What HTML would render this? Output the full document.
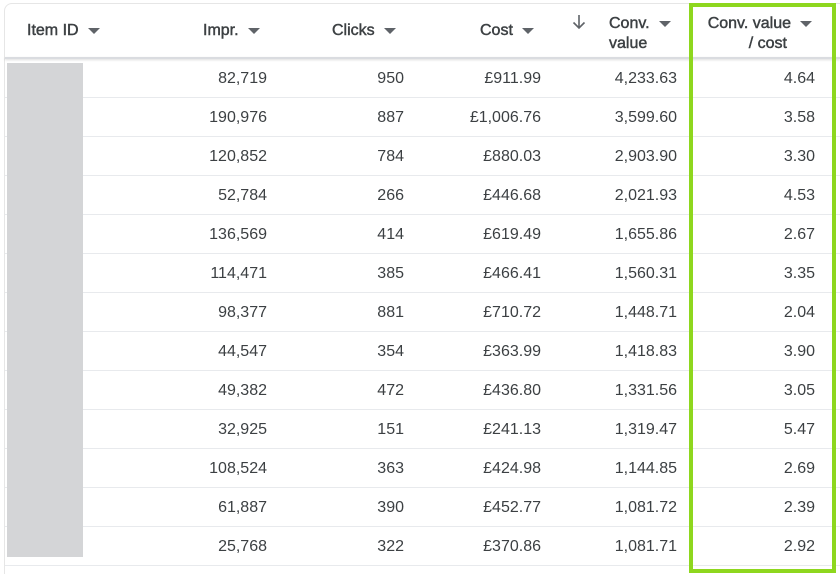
<!DOCTYPE html>
<html style="height:575px;overflow:hidden"><head><style>
body{margin:0;width:840px;height:575px;background:#fff;font-family:"Liberation Sans",Arial,sans-serif;color:#3c4043;overflow:hidden;position:relative}
.card{position:absolute;left:4px;top:3px;width:840px;height:570px;border:1px solid #e6e6e6;border-bottom:none;border-radius:8px 0 0 0}
.hdr{position:absolute;top:57px;left:5px;right:0;height:2px;background:#dadce0;box-shadow:0 1px 2px rgba(0,0,0,.15)}
.h{position:absolute;font-size:16px;color:#3c4043;line-height:20px;-webkit-text-stroke:0.45px #3c4043}
.tri{display:inline-block;width:0;height:0;border-left:6px solid transparent;border-right:6px solid transparent;border-top:6px solid #5f6368;vertical-align:middle;margin-left:9px}
.row{position:absolute;left:5px;right:0;height:39px;border-bottom:1px solid #e8eaed}
.c{position:absolute;top:1px;line-height:39px;font-size:16px;text-align:right}
.gray{position:absolute;left:7px;top:63px;width:76px;height:494px;background:#d4d5d7}
.green{position:absolute;left:689px;top:3px;width:139px;height:562px;border:4px solid #8ed71e}
</style></head><body>
<div class="card"></div>
<div class="h" style="left:27px;top:21px">Item ID<span class="tri"></span></div>
<div class="h" style="left:203px;top:21px">Impr.<span class="tri"></span></div>
<div class="h" style="left:332px;top:21px">Clicks<span class="tri"></span></div>
<div class="h" style="left:480px;top:21px">Cost<span class="tri"></span></div>
<svg style="position:absolute;left:571px;top:14px" width="16" height="16" viewBox="0 0 16 16"><path d="M8 1V14M2.5 8.5L8 14L13.5 8.5" fill="none" stroke="#5f6368" stroke-width="1.6"/></svg>
<div class="h" style="left:609px;top:14px">Conv.<span class="tri"></span><br>value</div>
<div class="h" style="left:700px;top:14px;width:112px;text-align:right">Conv. value<span class="tri"></span></div>
<div class="h" style="left:700px;top:34px;width:87px;text-align:right">/ cost</div>
<div class="hdr"></div>
<div class="row" style="top:58px"><span class="c" style="right:573px">82,719</span><span class="c" style="right:436px">950</span><span class="c" style="right:299px">£911.99</span><span class="c" style="right:163px">4,233.63</span><span class="c" style="right:25px">4.64</span></div>
<div class="row" style="top:97px"><span class="c" style="right:573px">190,976</span><span class="c" style="right:436px">887</span><span class="c" style="right:299px">£1,006.76</span><span class="c" style="right:163px">3,599.60</span><span class="c" style="right:25px">3.58</span></div>
<div class="row" style="top:136px"><span class="c" style="right:573px">120,852</span><span class="c" style="right:436px">784</span><span class="c" style="right:299px">£880.03</span><span class="c" style="right:163px">2,903.90</span><span class="c" style="right:25px">3.30</span></div>
<div class="row" style="top:175px"><span class="c" style="right:573px">52,784</span><span class="c" style="right:436px">266</span><span class="c" style="right:299px">£446.68</span><span class="c" style="right:163px">2,021.93</span><span class="c" style="right:25px">4.53</span></div>
<div class="row" style="top:214px"><span class="c" style="right:573px">136,569</span><span class="c" style="right:436px">414</span><span class="c" style="right:299px">£619.49</span><span class="c" style="right:163px">1,655.86</span><span class="c" style="right:25px">2.67</span></div>
<div class="row" style="top:253px"><span class="c" style="right:573px">114,471</span><span class="c" style="right:436px">385</span><span class="c" style="right:299px">£466.41</span><span class="c" style="right:163px">1,560.31</span><span class="c" style="right:25px">3.35</span></div>
<div class="row" style="top:292px"><span class="c" style="right:573px">98,377</span><span class="c" style="right:436px">881</span><span class="c" style="right:299px">£710.72</span><span class="c" style="right:163px">1,448.71</span><span class="c" style="right:25px">2.04</span></div>
<div class="row" style="top:331px"><span class="c" style="right:573px">44,547</span><span class="c" style="right:436px">354</span><span class="c" style="right:299px">£363.99</span><span class="c" style="right:163px">1,418.83</span><span class="c" style="right:25px">3.90</span></div>
<div class="row" style="top:370px"><span class="c" style="right:573px">49,382</span><span class="c" style="right:436px">472</span><span class="c" style="right:299px">£436.80</span><span class="c" style="right:163px">1,331.56</span><span class="c" style="right:25px">3.05</span></div>
<div class="row" style="top:409px"><span class="c" style="right:573px">32,925</span><span class="c" style="right:436px">151</span><span class="c" style="right:299px">£241.13</span><span class="c" style="right:163px">1,319.47</span><span class="c" style="right:25px">5.47</span></div>
<div class="row" style="top:448px"><span class="c" style="right:573px">108,524</span><span class="c" style="right:436px">363</span><span class="c" style="right:299px">£424.98</span><span class="c" style="right:163px">1,144.85</span><span class="c" style="right:25px">2.69</span></div>
<div class="row" style="top:487px"><span class="c" style="right:573px">61,887</span><span class="c" style="right:436px">390</span><span class="c" style="right:299px">£452.77</span><span class="c" style="right:163px">1,081.72</span><span class="c" style="right:25px">2.39</span></div>
<div class="row" style="top:526px"><span class="c" style="right:573px">25,768</span><span class="c" style="right:436px">322</span><span class="c" style="right:299px">£370.86</span><span class="c" style="right:163px">1,081.71</span><span class="c" style="right:25px">2.92</span></div>
<div class="gray"></div>
<div class="green"></div>
</body></html>
